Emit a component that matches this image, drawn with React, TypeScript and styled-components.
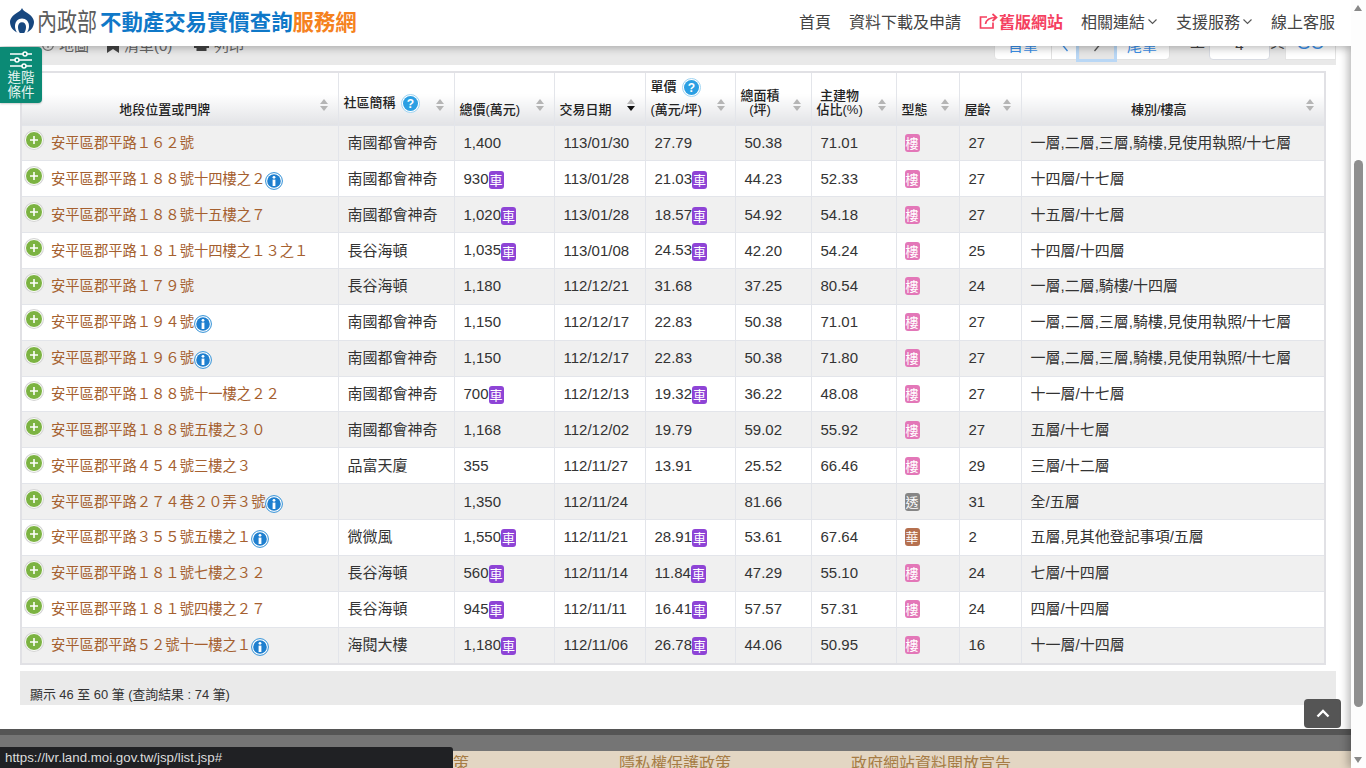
import React from "react";
import styled, { createGlobalStyle } from "styled-components";

const Global = createGlobalStyle`
  html, body { margin: 0; padding: 0; height: 100%; overflow: hidden; background: #fff; }
  body { font-family: "Liberation Sans", "Noto Sans CJK TC", sans-serif; color: #333; }
  #root { height: 768px; }
  * { box-sizing: border-box; }
`;

const Shell = styled.div`
  position: relative;
  display: flex;
  width: 1366px;
  height: 768px;
  overflow: hidden;
`;
const Page = styled.div`
  width: 1351px;
  height: 768px;
  display: flex;
  flex-direction: column;
  position: relative;
  overflow: hidden;
`;
const Header = styled.header`
  position: relative;
  z-index: 9;
  flex: none;
  height: 46px;
  background: #fff;
  box-shadow: 0 2px 8px rgba(0, 0, 0, 0.28);
  display: flex;
  align-items: center;
  padding: 0 16px 5px 10px;
`;
const Brand = styled.div`
  display: flex;
  align-items: center;
  font-family: "Noto Sans CJK TC", sans-serif;
`;
const Ministry = styled.span`
  font-size: 20px;
  line-height: 30px;
  font-weight: 400;
  color: #5c5c5c;
  margin: 0 3px 0 3px;
  width: 60px;
  white-space: nowrap;
  transform: scaleY(1.25);
`;
const TitleBlue = styled.span`
  font-size: 21.4px;
  font-weight: 700;
  color: #0f78c8;
`;
const TitleOrange = styled.span`
  font-size: 21.4px;
  font-weight: 700;
  color: #f5821f;
`;
const Nav = styled.nav`
  margin-left: auto;
  display: flex;
  align-items: center;
  gap: 18px;
  font-family: "Noto Sans CJK TC", sans-serif;
  font-size: 16px;
  color: #444;
`;
const NavItem = styled.span`
  display: inline-flex;
  align-items: center;
  white-space: nowrap;
`;
const NavOld = styled(NavItem)`
  color: #f5405f;
  font-weight: 700;
  gap: 1px;
`;
const Chevron = styled.svg`
  width: 11px;
  height: 8px;
  margin: 2px 0 0 2px;
`;

const ToolStrip = styled.div`
  flex: none;
  height: 19px;
  margin: 0 15px 0 20px;
  background: #e9e9e9;
  display: flex;
  align-items: flex-end;
  font-size: 15px;
  color: #666;
`;
const ToolLeft = styled.div`
  display: flex;
  align-items: center;
  margin: 0 0 8px 22px;
  line-height: 22px;
`;
const ToolLink = styled.span<{ $w: number }>`
  display: inline-flex;
  align-items: center;
  gap: 5px;
  white-space: nowrap;
  width: ${(p) => p.$w}px;
`;
const Pager = styled.div`
  margin-left: auto;
  display: flex;
  align-items: flex-end;
  height: 40px;
  margin-bottom: 5px;
`;
const PageGroup = styled.div`
  display: flex;
  height: 40px;
  background: #fff;
  border: 1px solid #e2e2e2;
  border-radius: 0 0 4px 4px;
`;
const PageBtn = styled.span<{ $w: number; $focus?: boolean }>`
  width: ${(p) => p.$w}px;
  display: flex;
  align-items: center;
  justify-content: center;
  padding-top: 9px;
  color: #3b8fe8;
  border-left: 1px solid #e2e2e2;
  &:first-child { border-left: 0; }
  ${(p) => p.$focus && "background:#e6e6e6; outline: 3px solid #b9d7f5; color:#666; position: relative;"}
`;
const PageWord = styled.span<{ $left: number; $right: number }>`
  margin: 0 ${(p) => p.$right}px 8px ${(p) => p.$left}px;
  line-height: 22px;
  color: #444;
  font-family: "Noto Sans CJK TC", sans-serif;
  align-self: flex-end;
`;
const PageInput = styled.span`
  width: 61px;
  height: 40px;
  background: #fff;
  border: 1px solid #d8dbe2;
  border-radius: 0 0 4px 4px;
  display: flex;
  align-items: center;
  justify-content: center;
  padding-top: 9px;
  color: #444;
`;
const GoBtn = styled.span`
  width: 51px;
  height: 40px;
  background: #fff;
  border: 1px solid #e4e4e4;
  border-top: 0;
  display: flex;
  align-items: center;
  justify-content: center;
  padding-top: 8px;
  color: #3b8fe8;
  font-size: 18px;
`;

const Content = styled.main`
  flex: none;
  padding: 6px 15px 0 20px;
`;
const TableBox = styled.div`
  width: 1306px;
  border: 2px solid #e1e1e5;
`;
const Table = styled.table`
  width: 100%;
  table-layout: fixed;
  border-collapse: collapse;
`;
const Th = styled.th`
  position: relative;
  height: 52px;
  padding: 0 17px 8px 5px;
  vertical-align: bottom;
  font-size: 13px;
  line-height: 14px;
  font-weight: 500;
  color: #222;
  text-align: left;
  background: linear-gradient(#fff 40%, #e2e3e6);
  border-left: 1px solid #e3e5ea;
  &:first-child { border-left: 0; }
`;
const ThWide = styled(Th)<{ $pad: number }>`
  text-align: center;
  padding-right: ${(p) => p.$pad}px;
`;
const ThStack = styled.span`
  display: inline-block;
  text-align: center;
`;
const HelpWrap = styled.span`
  display: inline-flex;
  align-items: center;
  gap: 5px;
`;
const HelpRaised = styled(HelpWrap)`
  margin-bottom: 6px;
`;
const CommunityLabel = styled(HelpWrap)`
  margin-bottom: 4px;
`;
const Sort = styled.svg`
  position: absolute;
  right: 10px;
  top: 26px;
  width: 8px;
  height: 12px;
`;
const Tr = styled.tr`
  height: 35.87px;
  &:nth-child(odd) { background: #f0f0f0; }
  &:nth-child(even) { background: #fff; }
`;
const Td = styled.td`
  padding: 0 0 0 9px;
  font-size: 15px;
  line-height: 20px;
  color: #333;
  border-left: 1px solid #e3e5ea;
  border-top: 1px solid #e3e5ea;
  white-space: nowrap;
  overflow: hidden;
  &:first-child { border-left: 0; }
`;
const AddrCell = styled.div`
  display: flex;
  align-items: center;
  margin-left: -6px;
`;
const Plus = styled.span`
  flex: none;
  width: 18px;
  height: 18px;
  margin: -6px 8px 0 0;
  border-radius: 50%;
  background: #7cb342;
  border: 1px solid #fff;
  box-shadow: 0 0 0 1px #d4d4d4;
  display: flex;
  align-items: center;
  justify-content: center;
`;
const Addr = styled.span`
  font-size: 14.3px;
  color: #a5602f;
`;
const Info = styled.svg`
  flex: none;
  width: 18px;
  height: 18px;
  margin: 4px 0 0 0;
`;
const Badge = styled.span<{ $c: string }>`
  display: inline-flex;
  align-items: center;
  justify-content: center;
  width: 15px;
  height: 18px;
  border-radius: 3px;
  background: ${(p) => p.$c};
  color: #fff;
  font-family: "Noto Sans CJK TC", sans-serif;
  font-size: 13px;
  line-height: 18px;
  vertical-align: middle;
`;
const TypeBadge = styled(Badge)`
  margin: -2px 0 0 -1px;
`;

const Summary = styled.div`
  flex: none;
  margin: 6px 15px 0 20px;
  height: 34px;
  background: #eaeaea;
  padding: 16px 0 0 10px;
  font-size: 12.9px;
  line-height: 16px;
  color: #333;
`;
const FootDark = styled.div`
  flex: none;
  margin-top: 24px;
  height: 22px;
  background: #757575;
  border-top: 6px solid #555;
`;
const FootTan = styled.div`
  flex: 1;
  background: #e3d6c3;
  color: #a67c45;
  font-family: "Noto Sans CJK TC", sans-serif;
  font-size: 16px;
  line-height: 22px;
  display: flex;
  padding-left: 437px;
  overflow: hidden;
  gap: 120px;
  white-space: nowrap;
`;
const FootClipped = styled.span`
  margin-right: 30px;
`;
const ToTop = styled.div`
  position: absolute;
  left: 1304px;
  top: 699px;
  width: 37px;
  height: 29px;
  background: #555;
  border-radius: 4px;
  display: flex;
  align-items: center;
  justify-content: center;
`;
const FilterTab = styled.div`
  position: absolute;
  z-index: 10;
  left: 0;
  top: 47px;
  width: 42px;
  height: 56px;
  background: #0b8a75;
  border-radius: 0 4px 4px 0;
  color: #e4f2ef;
  font-family: "Noto Sans CJK TC", sans-serif;
  font-size: 13.5px;
  line-height: 14.5px;
  text-align: center;
  padding-top: 4px;
  box-shadow: 0 1px 2px rgba(0,0,0,.2);
`;
const TabIcon = styled.svg`
  display: block;
  width: 22px;
  height: 18px;
  margin: 0 auto;
`;
const StatusBar = styled.div`
  position: absolute;
  z-index: 10;
  left: 0;
  bottom: 0;
  width: 453px;
  height: 21px;
  background: #202124;
  border-top-right-radius: 3px;
  color: #dcdcdc;
  font-size: 13.3px;
  line-height: 21px;
  padding-left: 5px;
`;
const Scrollbar = styled.div`
  flex: none;
  position: relative;
  z-index: 8;
  width: 15px;
  height: 768px;
  background: #fdfdfd;
  box-shadow: -3px 0 8px rgba(0, 0, 0, 0.28);
`;
const ScrollThumb = styled.div`
  position: absolute;
  left: 3px;
  width: 9px;
  top: 160px;
  height: 547px;
  background: #8f8f8f;
  border-radius: 5px;
`;
const ScrollUp = styled.span`
  position: absolute;
  left: 3px;
  top: 5px;
  border-left: 4.5px solid transparent;
  border-right: 4.5px solid transparent;
  border-bottom: 6px solid #888;
`;
const ScrollDown = styled.span`
  position: absolute;
  left: 3px;
  bottom: 5px;
  border-left: 4.5px solid transparent;
  border-right: 4.5px solid transparent;
  border-top: 6px solid #888;
`;

const SortIcon = ({ down }: { down?: boolean }) => (
  <Sort viewBox="0 0 8 12">
    <path d="M4 0 8 5H0z" fill="#b5b5b5" />
    <path d="M4 12 8 7H0z" fill={down ? "#111" : "#b5b5b5"} />
  </Sort>
);
const Help = () => (
  <svg width="19" height="19" viewBox="0 0 19 19">
    <circle cx="9.5" cy="9.5" r="9" fill="#fff" stroke="#9fd4f2" />
    <circle cx="9.5" cy="9.5" r="7.5" fill="#2b9fe3" />
    <text x="9.5" y="14" fontSize="12" fontWeight="700" fill="#fff" textAnchor="middle" fontFamily="Liberation Sans">?</text>
  </svg>
);
const InfoIcon = () => (
  <Info viewBox="0 0 18 18">
    <circle cx="9" cy="9" r="8.4" fill="#fff" stroke="#2f8fd6" />
    <circle cx="9" cy="9" r="6.8" fill="#1e7fcf" />
    <circle cx="9" cy="5.3" r="1.4" fill="#fff" />
    <rect x="7.6" y="7.6" width="2.8" height="6.4" fill="#fff" />
  </Info>
);
const DownChevron = () => (
  <Chevron viewBox="0 0 11 8" fill="none" stroke="#555" strokeWidth="1.1">
    <path d="M1.500 1.500 5.500 5.500 9.500 1.500" />
  </Chevron>
);
const CAR = "#8e44d6";
const Car = () => <Badge $c={CAR}>車</Badge>;
const TYPE: Record<string, string> = { 樓: "#e377b8", 透: "#868686", 華: "#b5704f" };

type Row = [string, boolean, string, string, boolean, string, string, boolean, string, string, string, string, string];
const rows: Row[] = [
  ["安平區郡平路１６２號", false, "南國都會神奇", "1,400", false, "113/01/30", "27.79", false, "50.38", "71.01", "樓", "27", "一層,二層,三層,騎樓,見使用執照/十七層"],
  ["安平區郡平路１８８號十四樓之２", true, "南國都會神奇", "930", true, "113/01/28", "21.03", true, "44.23", "52.33", "樓", "27", "十四層/十七層"],
  ["安平區郡平路１８８號十五樓之７", false, "南國都會神奇", "1,020", true, "113/01/28", "18.57", true, "54.92", "54.18", "樓", "27", "十五層/十七層"],
  ["安平區郡平路１８１號十四樓之１３之１", false, "長谷海頓", "1,035", true, "113/01/08", "24.53", true, "42.20", "54.24", "樓", "25", "十四層/十四層"],
  ["安平區郡平路１７９號", false, "長谷海頓", "1,180", false, "112/12/21", "31.68", false, "37.25", "80.54", "樓", "24", "一層,二層,騎樓/十四層"],
  ["安平區郡平路１９４號", true, "南國都會神奇", "1,150", false, "112/12/17", "22.83", false, "50.38", "71.01", "樓", "27", "一層,二層,三層,騎樓,見使用執照/十七層"],
  ["安平區郡平路１９６號", true, "南國都會神奇", "1,150", false, "112/12/17", "22.83", false, "50.38", "71.80", "樓", "27", "一層,二層,三層,騎樓,見使用執照/十七層"],
  ["安平區郡平路１８８號十一樓之２２", false, "南國都會神奇", "700", true, "112/12/13", "19.32", true, "36.22", "48.08", "樓", "27", "十一層/十七層"],
  ["安平區郡平路１８８號五樓之３０", false, "南國都會神奇", "1,168", false, "112/12/02", "19.79", false, "59.02", "55.92", "樓", "27", "五層/十七層"],
  ["安平區郡平路４５４號三樓之３", false, "品富天廈", "355", false, "112/11/27", "13.91", false, "25.52", "66.46", "樓", "29", "三層/十二層"],
  ["安平區郡平路２７４巷２０弄３號", true, "", "1,350", false, "112/11/24", "", false, "81.66", "", "透", "31", "全/五層"],
  ["安平區郡平路３５５號五樓之１", true, "微微風", "1,550", true, "112/11/21", "28.91", true, "53.61", "67.64", "華", "2", "五層,見其他登記事項/五層"],
  ["安平區郡平路１８１號七樓之３２", false, "長谷海頓", "560", true, "112/11/14", "11.84", true, "47.29", "55.10", "樓", "24", "七層/十四層"],
  ["安平區郡平路１８１號四樓之２７", false, "長谷海頓", "945", true, "112/11/11", "16.41", true, "57.57", "57.31", "樓", "24", "四層/十四層"],
  ["安平區郡平路５２號十一樓之１", true, "海閱大樓", "1,180", true, "112/11/06", "26.78", true, "44.06", "50.95", "樓", "16", "十一層/十四層"],
];
const widths = [316, 116, 100, 91, 90, 76, 85, 63, 62, 303];

export default function App() {
  return (
    <Shell>
      <Global />
      <Page>
        <Header>
          <Brand>
            <svg width="24" height="25" viewBox="0 0 24 25">
              <path d="M12 0c.8 2.500 2.800 3.400 5 4.800 4 2.400 7 5.700 7 9.200 0 5.800-4.500 10.500-10 11 .8-.8 1-1 1-1H9s.2.2 1 1C4.500 24.500 0 19.800 0 14 0 10.500 3 7.200 7 4.800 9.200 3.400 11.200 2.500 12 0z" fill="#17477f" />
              <path d="M7.500 25C5.800 23 5 20.500 5 18c0-4.500 3-7.500 7-7.500s7 3 7 7.500c0 2.500-.8 5-2.500 7z" fill="#fff" />
              <path d="M9.800 25C8.500 23 8 21 8 19c0-2.800 1.700-4.800 4-4.800s4 2 4 4.800c0 2-.5 4-1.800 6z" fill="#17477f" />
            </svg>
            <Ministry>內政部</Ministry>
            <TitleBlue>不動產交易實價查詢</TitleBlue>
            <TitleOrange>服務網</TitleOrange>
          </Brand>
          <Nav>
            <NavItem>首頁</NavItem>
            <NavItem>資料下載及申請</NavItem>
            <NavOld>
              <svg width="19" height="16" viewBox="0 0 19 16" fill="none" stroke="#f5405f" strokeWidth="1.700">
                <path d="M14 9.500V15H1.500V4H8" />
                <path d="M6.500 11c.5-4 4-6.500 11-6.500M13.500 1l4 3.500-4 3.500" />
              </svg>
              舊版網站
            </NavOld>
            <NavItem>
              相關連結
              <DownChevron />
            </NavItem>
            <NavItem>
              支援服務
              <DownChevron />
            </NavItem>
            <NavItem>線上客服</NavItem>
          </Nav>
        </Header>

        <ToolStrip>
          <ToolLeft>
            <ToolLink $w={65}>
              <svg width="12" height="16" viewBox="0 0 12 16" fill="none" stroke="#777" strokeWidth="1.200"><circle cx="6" cy="7" r="5.400" /><path d="M6 4v6" /></svg>
              地圖
            </ToolLink>
            <ToolLink $w={87}>
              <svg width="12" height="16" viewBox="0 0 12 16" fill="#444"><path d="M0 0h12v15L6 11 0 15z" /></svg>
              清單(0)
            </ToolLink>
            <ToolLink $w={52}>
              <svg width="15" height="16" viewBox="0 0 15 16" fill="#444"><path d="M0 2h15v8h-2.500v3h-10v-3H0z" /></svg>
              列印
            </ToolLink>
          </ToolLeft>
          <Pager>
            <PageGroup>
              <PageBtn $w={56}>首筆</PageBtn>
              <PageBtn $w={28}>
                <svg width="8" height="14" viewBox="0 0 8 14" fill="none" stroke="#3b8fe8" strokeWidth="1.300"><path d="M6.500 1 1.500 7l5 6" /></svg>
              </PageBtn>
              <PageBtn $w={35} $focus>
                <svg width="8" height="14" viewBox="0 0 8 14" fill="none" stroke="#555" strokeWidth="1.300"><path d="M1.500 1l5 6-5 6" /></svg>
              </PageBtn>
              <PageBtn $w={55}>尾筆</PageBtn>
            </PageGroup>
            <PageWord $left={20} $right={4}>至</PageWord>
            <PageInput>4</PageInput>
            <PageWord $left={0} $right={0}>頁</PageWord>
            <GoBtn>GO</GoBtn>
          </Pager>
        </ToolStrip>

        <Content>
          <TableBox>
            <Table>
              <colgroup>
                {widths.map((w, i) => (
                  <col key={i} style={{ width: w }} />
                ))}
              </colgroup>
              <thead>
                <tr>
                  <ThWide $pad={35}>地段位置或門牌<SortIcon /></ThWide>
                  <Th><CommunityLabel>社區簡稱 <Help /></CommunityLabel><br /><SortIcon /></Th>
                  <Th>總價(萬元)<SortIcon /></Th>
                  <Th>交易日期<SortIcon down /></Th>
                  <Th><HelpRaised>單價 <Help /></HelpRaised><br />(萬元/坪)<SortIcon /></Th>
                  <Th><ThStack>總面積<br />(坪)</ThStack><SortIcon /></Th>
                  <Th><ThStack>主建物<br />佔比(%)</ThStack><SortIcon /></Th>
                  <Th>型態<SortIcon /></Th>
                  <Th>屋齡<SortIcon /></Th>
                  <ThWide $pad={33}>棟別/樓高<SortIcon /></ThWide>
                </tr>
              </thead>
              <tbody>
                {rows.map((r, i) => (
                  <Tr key={i}>
                    <Td>
                      <AddrCell>
                        <Plus>
                          <svg width="10" height="10" viewBox="0 0 10 10" stroke="#fff" strokeWidth="1.600"><path d="M5 1v8M1 5h8" /></svg>
                        </Plus>
                        <Addr>{r[0]}</Addr>
                        {r[1] && <InfoIcon />}
                      </AddrCell>
                    </Td>
                    <Td>{r[2]}</Td>
                    <Td>{r[3]}{r[4] && <Car />}</Td>
                    <Td>{r[5]}</Td>
                    <Td>{r[6]}{r[7] && <Car />}</Td>
                    <Td>{r[8]}</Td>
                    <Td>{r[9]}</Td>
                    <Td><TypeBadge $c={TYPE[r[10]]}>{r[10]}</TypeBadge></Td>
                    <Td>{r[11]}</Td>
                    <Td>{r[12]}</Td>
                  </Tr>
                ))}
              </tbody>
            </Table>
          </TableBox>
        </Content>
        <Summary>顯示 46 至 60 筆 (查詢結果 : 74 筆)</Summary>
        <FootDark />
        <FootTan>
          <FootClipped>政策</FootClipped>
          <span>隱私權保護政策</span>
          <span>政府網站資料開放宣告</span>
        </FootTan>
        <ToTop>
          <svg width="14" height="9" viewBox="0 0 14 9" fill="none" stroke="#fff" strokeWidth="2.400"><path d="M1.500 7.500 7 2l5.500 5.500" /></svg>
        </ToTop>
        <FilterTab>
          <TabIcon viewBox="0 0 22 18" fill="none" stroke="#fff" strokeWidth="1.500">
            <path d="M0 3h22M0 9h22M0 15h22" />
            <circle cx="15" cy="3" r="2" fill="#0b8a75" />
            <circle cx="7" cy="9" r="2" fill="#0b8a75" />
            <circle cx="14" cy="15" r="2" fill="#0b8a75" />
          </TabIcon>
          進階<br />條件
        </FilterTab>
        <StatusBar>https://lvr.land.moi.gov.tw/jsp/list.jsp#</StatusBar>
      </Page>
      <Scrollbar>
        <ScrollUp />
        <ScrollThumb />
        <ScrollDown />
      </Scrollbar>
    </Shell>
  );
}
